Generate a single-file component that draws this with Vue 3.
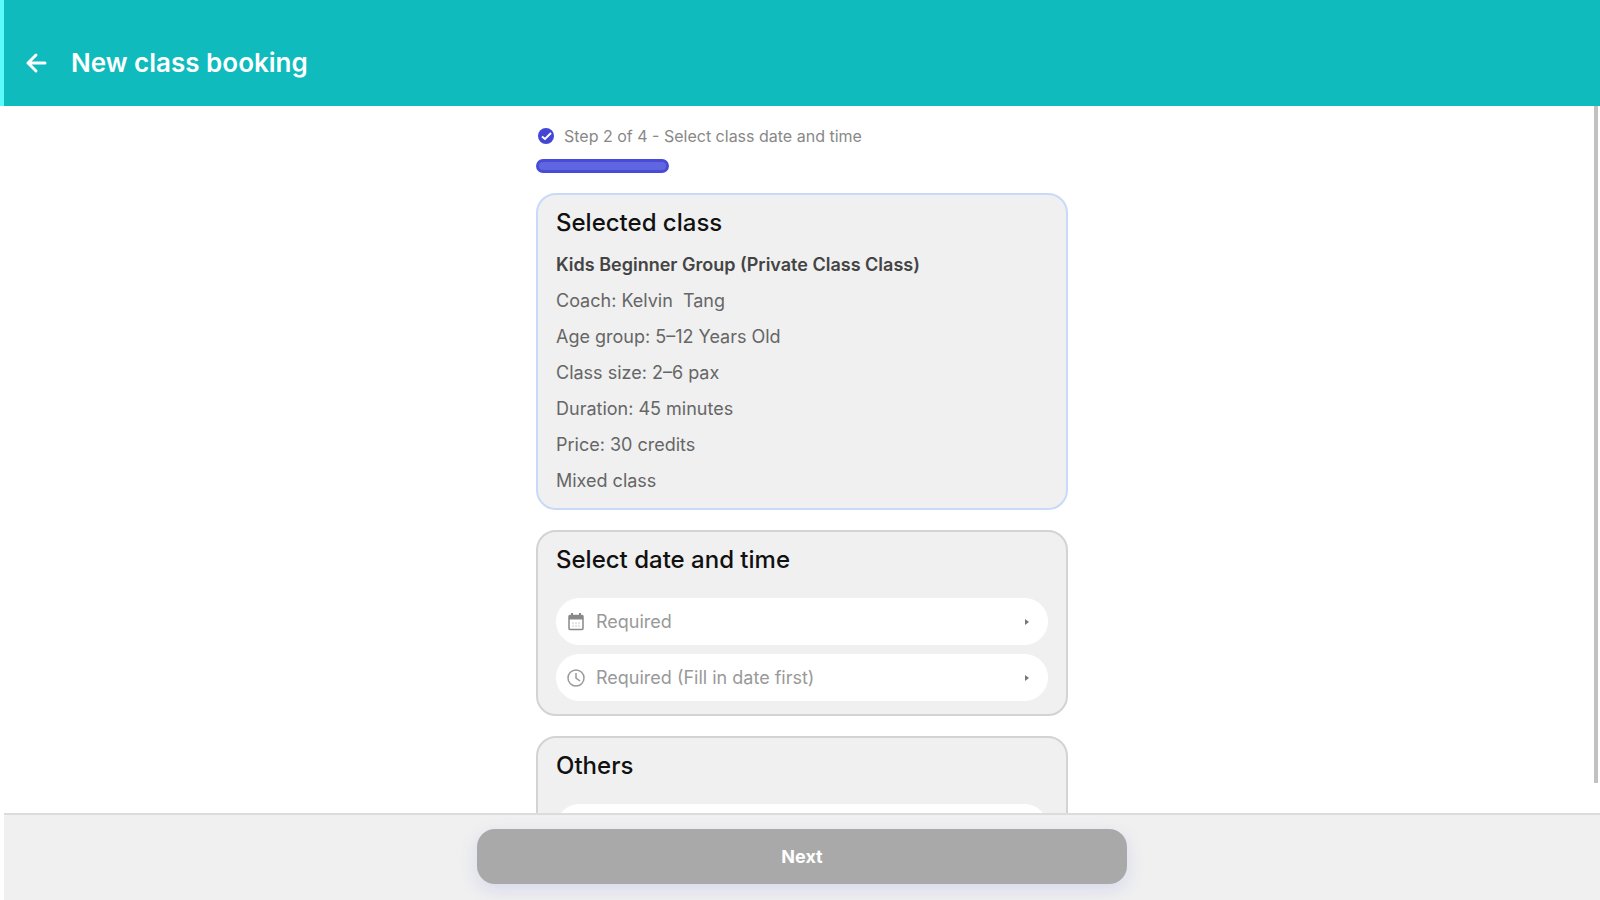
<script setup>
import { ref } from 'vue'

// selected class
const classTitle = 'Kids Beginner Group (Private Class Class)'
const details = [
  'Coach: Kelvin  Tang',
  'Age group: 5–12 Years Old',
  'Class size: 2–6 pax',
  'Duration: 45 minutes',
  'Price: 30 credits',
  'Mixed class'
]

// form
const date = ref('')
const time = ref('')
const other = ref('')
const progress = 25
</script>

<template>
  <div class="page">
    <header class="topbar">
      <button class="back" type="button" aria-label="Back">
        <svg width="24" height="24" viewBox="0 0 24 24" fill="none" stroke="currentColor" stroke-width="3" stroke-linecap="round" stroke-linejoin="round">
          <path d="M20 12H3M11 4L3 12l8 8" />
        </svg>
      </button>
      <h1>New class booking</h1>
    </header>

    <main class="content">
      <div class="column">
        <div class="step">
          <svg width="16" height="16" viewBox="0 0 16 16">
            <circle cx="8" cy="8" r="8" fill="#4347d4" />
            <path d="M4 8.500l3 2.500 6-6" fill="none" stroke="#fff" stroke-width="2" />
          </svg>
          <span>Step 2 of 4 - Select class date and time</span>
        </div>
        <div class="track" role="progressbar" :aria-valuenow="progress" aria-label="Booking progress">
          <div class="bar" :style="{ width: progress + '%' }"></div>
        </div>

        <section class="card selected">
          <h2>Selected class</h2>
          <p class="name">{{ classTitle }}</p>
          <p v-for="line in details" :key="line">{{ line }}</p>
        </section>

        <section class="card">
          <h2>Select date and time</h2>
          <div class="fields">
            <div class="field">
              <svg width="20" height="20" viewBox="0 0 20 20" fill="none" stroke="#888">
                <rect x="3" y="3.500" width="14" height="14" rx="1" stroke-width="1.500" />
                <path d="M3 5.500h14" stroke-width="4" />
                <path d="M6 1v4M14 1v4" stroke-width="2" />
                <path d="M6 11h8M6 14h8" stroke="#ccc" stroke-dasharray="2 1" />
              </svg>
              <select v-model="date" aria-label="Date">
                <option value="">Required</option>
              </select>
              <svg width="6" height="6" viewBox="0 0 6 6"><path d="M1 0l4 3-4 3z" fill="#777" /></svg>
            </div>
            <div class="field">
              <svg width="20" height="20" viewBox="0 0 20 20" fill="none" stroke="#999" stroke-width="1.500">
                <circle cx="10" cy="10" r="8" />
                <path d="M10 5v5l4 3" />
              </svg>
              <select v-model="time" aria-label="Time">
                <option value="">Required (Fill in date first)</option>
              </select>
              <svg width="6" height="6" viewBox="0 0 6 6"><path d="M1 0l4 3-4 3z" fill="#777" /></svg>
            </div>
          </div>
        </section>

        <section class="card">
          <h2>Others</h2>
          <div class="fields">
            <div class="field">
              <input v-model="other" type="text" aria-label="Others" />
            </div>
          </div>
        </section>
      </div>
      <div class="thumb"></div>
    </main>

    <footer class="footer">
      <button class="next" type="button">Next</button>
    </footer>
  </div>
</template>

<style>
body {
  margin: 0;
  background: #fff;
}
</style>

<style scoped>
.page {
  display: flex;
  flex-direction: column;
  height: 100vh;
  font-family: Inter, "Open Sans", sans-serif;
  color: #666;
}

/* header */
.topbar {
  display: flex;
  align-items: center;
  gap: 22px;
  flex: none;
  box-sizing: border-box;
  height: 106px;
  padding: 19px 21px 0;
  border-left: 4px solid #5cfbfb;
  background: #0fbbbd;
  color: #fff;
}

.back {
  display: flex;
  padding: 0;
  border: none;
  background: none;
  color: inherit;
  cursor: pointer;
}

h1 {
  margin: 0;
  font-size: 26px;
  font-weight: 600;
}

/* scrolling content */
.content {
  position: relative;
  flex: 1;
  min-height: 0;
  margin-left: 4px;
  overflow: hidden;
}

.column {
  max-width: 532px;
  margin: 0 auto;
}

.step {
  display: flex;
  align-items: center;
  gap: 10px;
  padding: 18px 0 0 2px;
  font-size: 16px;
  line-height: 24px;
  color: #888;
}

.track {
  margin: 11px 0 20px;
}

.bar {
  box-sizing: border-box;
  height: 14px;
  border: 3px solid #484bd5;
  border-radius: 7px;
  background: #6066df;
}

.card {
  margin-bottom: 20px;
  padding: 10px 18px 9px;
  border: 2px solid #d3d3d3;
  border-radius: 20px;
  background: #f0f0f0;
}

.selected {
  border-color: #c9daf8;
}

h2 {
  margin: 0 0 6px;
  font-size: 24px;
  line-height: 36px;
  font-weight: 500;
  color: #111;
}

.card p {
  margin: 0;
  font-size: 18px;
  line-height: 36px;
  white-space: pre-wrap;
}

.card .name {
  font-weight: 600;
  color: #444;
}

.fields {
  display: flex;
  flex-direction: column;
  gap: 9px;
  margin: 20px 0 4px;
}

.field {
  display: flex;
  align-items: center;
  gap: 10px;
  height: 47px;
  padding: 0 18px 0 10px;
  border-radius: 24px;
  background: #fff;
}

.field select,
.field input {
  flex: 1;
  min-width: 0;
  padding: 0;
  border: none;
  outline: none;
  appearance: none;
  background: none;
  font-family: inherit;
  font-size: 18px;
  color: #999;
}

.thumb {
  position: absolute;
  top: 0;
  right: 2px;
  bottom: 30px;
  width: 4px;
  background: #c1c1c1;
}

/* footer */
.footer {
  display: flex;
  justify-content: center;
  flex: none;
  margin-left: 4px;
  padding: 14px 20px 16px;
  border-top: 2px solid #dcdcdc;
  background: #f0f0f0;
}

.next {
  width: 100%;
  max-width: 650px;
  height: 55px;
  border: none;
  border-radius: 18px;
  background: #a9a9a9;
  box-shadow: 0 6px 18px rgba(90, 100, 220, 0.16);
  font-family: inherit;
  font-size: 18px;
  font-weight: 700;
  color: #fff;
  cursor: pointer;
}
</style>
